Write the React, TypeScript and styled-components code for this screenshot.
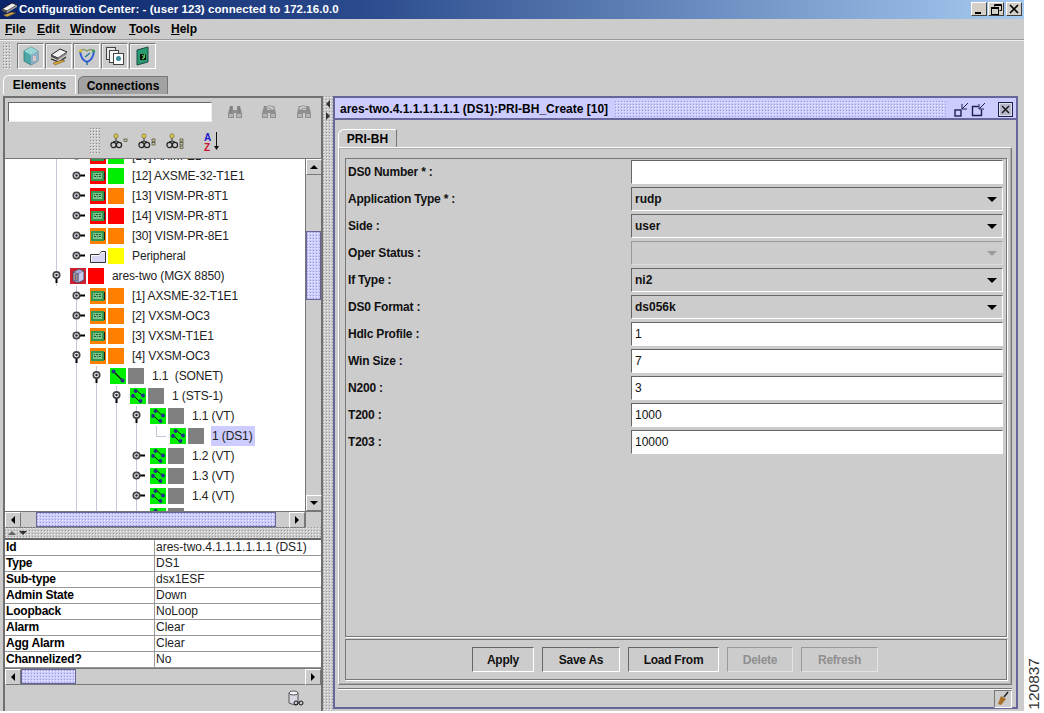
import React from 'react';
import styled, {createGlobalStyle, css} from 'styled-components';

const GlobalStyle = createGlobalStyle`
  html, body {
    margin: 0;
    padding: 0;
    background: #fff;
  }
  body {
    font-family: "Liberation Sans", Arial, sans-serif;
    font-size: 12px;
    color: #000;
    overflow: hidden;
  }
  * {
    box-sizing: border-box;
  }
`

const bumps = (dark: string, light: string) => css`
  background-image: radial-gradient(circle at 0.5px 0.5px, ${dark} 0.7px, transparent 0.8px),
    radial-gradient(circle at 1.5px 1.5px, ${light} 0.7px, transparent 0.8px);
  background-size: 3px 3px;
`

const Page = styled.div`
  display: flex;
  width: 1044px;
  height: 713px;
`

const Frame = styled.div`
  width: 1024px;
  height: 711px;
  background: #cccccc;
  display: flex;
  flex-direction: column;
`

const Strip = styled.div`
  flex: 1;
  display: flex;
  justify-content: center;
  align-items: flex-end;
  padding-bottom: 3px;
`

const FigureNumber = styled.span`
  writing-mode: vertical-rl;
  transform: rotate(180deg);
  font-size: 15.5px;
  line-height: 16px;
  color: #333;
`

const TitleBar = styled.div`
  height: 19px;
  flex: none;
  display: flex;
  align-items: center;
  padding: 0 2px 1px 1px;
  background: linear-gradient(90deg, #0a246a 0%, #2a4a8c 35%, #a6caf0 100%);
`

const TitleText = styled.span`
  margin-left: 1px;
  color: #fff;
  font-weight: bold;
  font-size: 11.5px;
  letter-spacing: 0.07px;
  flex: 1;
`

const WinButton = styled.button<{$gap?: number}>`
  width: 16px;
  height: 14px;
  padding: 0;
  margin-left: ${p => p.$gap ?? 1}px;
  background: #d4d0c8;
  border: 1px solid;
  border-color: #fff #404040 #404040 #fff;
  display: flex;
  align-items: center;
  justify-content: center;
`

const MenuBar = styled.div`
  height: 21px;
  flex: none;
  display: flex;
  align-items: center;
  padding-left: 5px;
  border-bottom: 1px solid #999;
  box-shadow: 0 1px 0 #eee;
`

const MenuItem = styled.span<{$width: number}>`
  width: ${p => p.$width}px;
  font-weight: bold;
  font-size: 12px;
  u {
    text-decoration: underline;
  }
`

const ToolBar = styled.div`
  height: 34px;
  flex: none;
  display: flex;
  gap: 1px;
  padding: 3px 0 0 3px;
`

const Grip = styled.div<{$width: number; $height: number}>`
  width: ${p => p.$width}px;
  height: ${p => p.$height}px;
  flex: none;
  ${bumps('#8a8a8a', '#f4f4f4')}
`

const ToolButton = styled.button<{$first?: boolean}>`
  width: 27px;
  height: 26px;
  margin-left: ${p => (p.$first ? 4 : 0)}px;
  padding: 0;
  background: #cccccc;
  border: 1px solid;
  border-color: #777 #fff #fff #777;
  box-shadow: inset 1px 1px 0 #eee;
  display: flex;
  align-items: center;
  justify-content: center;
`

const TabRow = styled.div`
  height: 20px;
  flex: none;
  display: flex;
  align-items: flex-end;
  gap: 2px;
  padding-left: 3px;
`

const MainTab = styled.div<{$active?: boolean}>`
  height: ${p => (p.$active ? 19 : 18)}px;
  width: ${p => (p.$active ? 73 : 90)}px;
  font-weight: bold;
  font-size: 12px;
  line-height: 18px;
  text-align: center;
  background: ${p => (p.$active ? '#cccccc' : '#a2a2a2')};
  border: 1px solid ${p => (p.$active ? '#fff' : '#777')};
  border-bottom: none;
  border-top-left-radius: 6px;
`

const Main = styled.div`
  flex: 1;
  min-height: 0;
  display: flex;
  padding: 2px 6px 0 3px;
`

const LeftPane = styled.div`
  width: 320px;
  flex: none;
  display: flex;
  flex-direction: column;
  border: 2px solid #707070;
  border-bottom: none;
`

const SearchBlock = styled.div`
  height: 60px;
  flex: none;
  display: flex;
  flex-direction: column;
`

const SearchRow = styled.div`
  height: 24px;
  display: flex;
  align-items: center;
  padding: 4px 0 0 3px;
`

const SearchInput = styled.div`
  width: 204px;
  height: 20px;
  background: #fff;
  border: 1px solid;
  border-color: #666 #eee #eee #666;
`

const FindButton = styled.span<{$gap: number}>`
  margin-left: ${p => p.$gap}px;
  display: flex;
`

const FilterRow = styled.div`
  flex: 1;
  display: flex;
  align-items: center;
  padding: 3px 0 0 85px;
`

const FilterIcon = styled.span<{$gap: number}>`
  margin-left: ${p => p.$gap}px;
  display: flex;
`

const TreeBlock = styled.div`
  height: 369px;
  flex: none;
  display: grid;
  grid-template-columns: 300px 16px;
  grid-template-rows: 352px 17px;
  border-top: 1px solid #777;
`

const TreeView = styled.div`
  background: #fff;
  overflow: hidden;
`

const TreeInner = styled.div`
  margin-top: -13px;
`

const Row = styled.div`
  height: 20px;
  display: flex;
  align-items: center;
  padding-left: 41px;
  white-space: nowrap;
`

const Cell = styled.div<{$line?: boolean}>`
  width: 20px;
  height: 20px;
  flex: none;
  ${p => p.$line && css`
    background: linear-gradient(#c6c6da, #c6c6da) 10px 0 / 1px 100% no-repeat;
  `}
  svg {
    display: block;
  }
`

const IconSlot = styled.div`
  width: 16px;
  height: 16px;
  flex: none;
  margin-left: 4px;
  svg {
    display: block;
  }
`

const StatusBox = styled.div<{$color: string}>`
  width: 16px;
  height: 16px;
  flex: none;
  margin-left: 2px;
  background: ${p => p.$color};
`

const TreeLabel = styled.span<{$selected?: boolean}>`
  margin-left: 7px;
  padding: 0 2px 0 1px;
  height: 20px;
  line-height: 20px;
  font-size: 12px;
  letter-spacing: -0.12px;
  white-space: pre;
  color: #222;
  background: ${p => (p.$selected ? '#ccccff' : 'transparent')};
`

const VScroll = styled.div`
  display: flex;
  flex-direction: column;
  background: #cccccc;
  border-left: 1px solid #777;
`

const HScroll = styled.div<{$height?: number}>`
  display: flex;
  height: ${p => p.$height ?? 17}px;
  background: #cccccc;
  border-top: 1px solid #777;
  border-bottom: 1px solid #777;
`

const ScrollButton = styled.div`
  width: 16px;
  height: 16px;
  flex: none;
  display: flex;
  align-items: center;
  justify-content: center;
  background: #cccccc;
  border: 1px solid;
  border-color: #fff #777 #777 #fff;
`

const Arrow = styled.span<{$dir: 'up' | 'down' | 'left' | 'right'; $size?: number; $color?: string}>`
  width: 0;
  height: 0;
  border-style: solid;
  ${p => {
    const s = p.$size ?? 4
    const c = p.$color ?? '#000'
    switch (p.$dir) {
      case 'up': return `border-width: 0 ${s}px ${s}px; border-color: transparent transparent ${c};`
      case 'down': return `border-width: ${s}px ${s}px 0; border-color: ${c} transparent transparent;`
      case 'left': return `border-width: ${s}px ${s}px ${s}px 0; border-color: transparent ${c} transparent transparent;`
      default: return `border-width: ${s}px 0 ${s}px ${s}px; border-color: transparent transparent transparent ${c};`
    }
  }}
`

const Space = styled.div<{$size: number}>`
  flex: ${p => p.$size} 0 0;
`

const Thumb = styled.div<{$size: number}>`
  flex: ${p => p.$size} 0 0;
  background-color: #ccccff;
  border: 1px solid #66669a;
  ${bumps('#9999cc', '#eeeeff')}
`

const Corner = styled.div`
  background: #cccccc;
  border-top: 1px solid #777;
  border-left: 1px solid #777;
`

const PaneDivider = styled.div`
  height: 11px;
  flex: none;
  display: flex;
  align-items: center;
  gap: 3px;
  padding-left: 3px;
  ${bumps('#9a9a9a', '#efefef')}
`

const PropsTable = styled.div`
  flex: none;
  display: grid;
  grid-template-columns: 150px 1fr;
  grid-auto-rows: 16px;
  background: #fff;
  border-top: 2px solid #666;
`

const PropName = styled.div`
  font-weight: bold;
  font-size: 12px;
  line-height: 15px;
  letter-spacing: -0.2px;
  padding-left: 1px;
  border-bottom: 1px solid #999;
  border-right: 1px solid #999;
  white-space: nowrap;
`

const PropValue = styled.div`
  font-size: 12px;
  line-height: 15px;
  padding-left: 1px;
  color: #222;
  border-bottom: 1px solid #999;
  white-space: nowrap;
`

const PaneFooter = styled.div`
  flex: 1;
  display: flex;
  justify-content: flex-end;
  align-items: center;
  padding-right: 16px;
`

const Splitter = styled.div`
  width: 10px;
  flex: none;
  display: flex;
  flex-direction: column;
  align-items: center;
  gap: 4px;
  padding: 4px 2px 0 1px;
  ${bumps('#9a9a9a', '#efefef')}
`

const RightPane = styled.div`
  flex: 1;
  min-width: 0;
  display: flex;
  flex-direction: column;
  margin-bottom: 2px;
  border: 2px solid #66669a;
`

const FrameHeader = styled.div`
  height: 22px;
  flex: none;
  display: flex;
  align-items: center;
  padding: 2px 3px 0 5px;
  background: #ccccff;
  border-bottom: 2px solid #66669a;
`

const FrameTitle = styled.span`
  font-weight: bold;
  font-size: 12px;
  white-space: nowrap;
`

const FrameGrip = styled.div`
  flex: 1;
  height: 16px;
  margin: 0 8px 0 7px;
  ${bumps('#9999cc', '#eeeeff')}
`

const FrameIcon = styled.span<{$gap: number}>`
  margin-left: ${p => p.$gap}px;
  display: flex;
`

const FrameBody = styled.div`
  flex: 1;
  min-height: 0;
  display: flex;
  flex-direction: column;
  padding: 0 4px 0 3px;
`

const SubTabRow = styled.div`
  height: 27px;
  flex: none;
  display: flex;
  align-items: flex-end;
`

const SubTab = styled.div`
  width: 59px;
  height: 18px;
  font-weight: bold;
  font-size: 12px;
  line-height: 18px;
  text-align: center;
  border: 1px solid #fff;
  border-right-color: #777;
  border-bottom: none;
  border-top-left-radius: 6px;
`

const TabPane = styled.div`
  height: 538px;
  flex: none;
  display: flex;
  flex-direction: column;
  gap: 2px;
  padding: 10px 4px 4px 6px;
  border: 1px solid;
  border-color: #fff #777 #777 #fff;
  outline: 1px solid #aaa;
  outline-offset: -2px;
`

const FormPanel = styled.div`
  flex: 1;
  display: grid;
  grid-template-columns: 1fr 372px;
  grid-auto-rows: 24px;
  row-gap: 3px;
  padding: 1px 3px 0 2px;
  border: 1px solid #777;
  box-shadow: 1px 1px 0 #fff;
`

const FormLabel = styled.label`
  font-weight: bold;
  font-size: 12px;
  line-height: 24px;
  letter-spacing: -0.2px;
  color: #111;
`

const Field = styled.div<{$bold?: boolean; $white?: boolean; $disabled?: boolean}>`
  display: flex;
  align-items: center;
  justify-content: space-between;
  padding: 0 5px 0 3px;
  font-size: 12px;
  font-weight: ${p => (p.$bold ? 'bold' : 'normal')};
  background: ${p => (p.$white ? '#fff' : '#cccccc')};
  border: 1px solid;
  border-color: ${p => (p.$disabled ? '#999 #ddd #ddd #999' : '#666 #fff #fff #666')};
  color: #111;
`

const ButtonPanel = styled.div`
  height: 41px;
  flex: none;
  display: flex;
  align-items: center;
  padding: 0 0 0 126px;
  gap: 8px;
  border: 1px solid #777;
  box-shadow: 1px 1px 0 #fff;
`

const ActionButton = styled.button<{$width: number}>`
  width: ${p => p.$width}px;
  height: 25px;
  padding: 0;
  font-family: inherit;
  font-weight: bold;
  font-size: 12px;
  letter-spacing: -0.25px;
  color: #111;
  background: #cccccc;
  border: 1px solid;
  border-color: #666 #fff #fff #666;
  &:disabled {
    color: #8f8f8f;
    border-color: #999 #e4e4e4 #e4e4e4 #999;
  }
`

const StatusBar = styled.div`
  flex: 1;
  display: flex;
  justify-content: flex-end;
  align-items: stretch;
  margin-top: 3px;
  border-top: 1px solid #777;
  box-shadow: inset 0 1px 0 #fff;
  padding-top: 1px;
`

const PinCell = styled.div`
  width: 18px;
  display: flex;
  align-items: center;
  justify-content: center;
  border: 1px solid;
  border-color: #777 #fff #fff #777;
`

const green = '#00ee00'
const orange = '#ff8000'
const red = '#ff0000'
const yellow = '#ffff00'
const gray = '#808080'

const Card = ({bg}: {bg: string}) => (
  <svg width="16" height="16" viewBox="0 0 16 16">
    <rect width="16" height="16" fill={bg}/>
    <rect x="1" y="3" width="13" height="10" fill="#2f9a4f"/>
    <rect x="3" y="5" width="9" height="6" fill="#7cc48c"/>
    <path d="M4 6.5h1M6 6.5h2M9 6.5h2M4 8.5h2M7 8.5h1M9 8.5h2" stroke="#1d5a38" strokeWidth="1"/>
    <rect x="14" y="4" width="1" height="8" fill="#222"/>
  </svg>
)

const Folder = () => (
  <svg width="16" height="16" viewBox="0 0 16 16">
    <path d="M0.5 6.5h9l2-3h4v11h-15z" fill="#d8d8f4" stroke="#333"/>
    <path d="M1.5 13.5v-6h8l2-3h3" fill="none" stroke="#fff"/>
  </svg>
)

const Chassis = () => (
  <svg width="16" height="16" viewBox="0 0 16 16">
    <rect width="16" height="16" fill="#d02030"/>
    <path d="M3 4l6-3 5 2v9l-6 3-5-2z" fill="#a8a8d8" stroke="#333" strokeWidth="0.6"/>
    <path d="M3 4l5 2 6-3M8 6v9" fill="none" stroke="#333" strokeWidth="0.6"/>
    <path d="M3.5 6h4v7h-4z" fill="#6a6a9a"/>
    <path d="M4 7h1M6 7h1M4 9h1M6 9h1M4 11h1M6 11h1" stroke="#e6c050"/>
    <path d="M9 5.5l4-2v8l-4 2z" fill="#c8c8ea"/>
  </svg>
)

const SingleLink = () => (
  <svg width="16" height="16" viewBox="0 0 16 16">
    <rect width="16" height="16" fill={green}/>
    <path d="M3 3l10 10" stroke="#111" strokeWidth="1.2"/>
    <circle cx="3.5" cy="3.5" r="2" fill="#23308a"/>
    <circle cx="12.5" cy="12.5" r="2" fill="#23308a"/>
  </svg>
)

const MultiLink = () => (
  <svg width="16" height="16" viewBox="0 0 16 16">
    <rect width="16" height="16" fill={green}/>
    <path d="M5 1l9 8M2 6l9 9" stroke="#111" strokeWidth="1"/>
    <circle cx="5.5" cy="3" r="1.9" fill="#23308a"/>
    <circle cx="13" cy="7.5" r="1.9" fill="#23308a"/>
    <circle cx="3" cy="8" r="1.9" fill="#23308a"/>
    <circle cx="10.5" cy="13" r="1.9" fill="#23308a"/>
  </svg>
)

const OpenHandle = () => (
  <svg width="20" height="20" viewBox="0 0 20 20">
    <path d="M10.5 11v6" stroke="#000" strokeWidth="2"/>
    <circle cx="10.5" cy="9" r="3.2" fill="#f4f4fa" stroke="#444" strokeWidth="1.7"/>
    <circle cx="10.5" cy="9" r="1.2" fill="#223"/>
  </svg>
)

const ClosedHandle = () => (
  <svg width="20" height="20" viewBox="0 0 20 20">
    <path d="M13 9.5h6" stroke="#000" strokeWidth="2"/>
    <circle cx="10.5" cy="9.5" r="3.2" fill="#f4f4fa" stroke="#444" strokeWidth="1.7"/>
    <circle cx="10.5" cy="9.5" r="1.2" fill="#223"/>
  </svg>
)

const Elbow = () => (
  <svg width="20" height="20" viewBox="0 0 20 20">
    <path d="M10.5 0v10.5h9.5" fill="none" stroke="#c6c6da"/>
  </svg>
)

const Binoculars = ({variant}: {variant: 'plain' | 'next' | 'prev'}) => (
  <svg width="18" height="16" viewBox="0 0 18 16">
    <path d="M4 2h3v4h4V2h3l2 7v5h-6V9H8v5H2V9z" fill="#8f8f8f"/>
    <path d="M3 10h4v3H3zM11 10h4v3h-4z" fill="#b4b4b4"/>
    {variant === 'plain' && <path d="M5 2v7M13 2v7" stroke="#777"/>}
    {variant === 'next' && <path d="M6 3q4-3 7 0l1-1v4h-4l1-1q-2-2-4 0z" fill="#cccccc" stroke="#888" strokeWidth="0.7"/>}
    {variant === 'prev' && <path d="M12 3q-4-3-7 0l-1-1v4h4l-1-1q2-2 4 0z" fill="#cccccc" stroke="#888" strokeWidth="0.7"/>}
  </svg>
)

const Glasses = ({count}: {count: number}) => (
  <svg width="19" height="17" viewBox="0 0 19 17">
    <circle cx="6" cy="3" r="2.2" fill="#d8c838" stroke="#555" strokeWidth="0.5"/>
    <path d="M6 5v3" stroke="#444"/>
    <circle cx="3.5" cy="12" r="2.6" fill="none" stroke="#222" strokeWidth="1.2"/>
    <circle cx="9" cy="12" r="2.6" fill="none" stroke="#222" strokeWidth="1.2"/>
    <path d="M3 9l3-1 3 1" fill="none" stroke="#222"/>
    {Array.from({length: count}).map((_, i) => (
      <rect key={i} x="14" y={6 + i * 3.5} width="3" height="2.5" fill="#cfc890" stroke="#333" strokeWidth="0.6"/>
    ))}
  </svg>
)

const SortIcon = () => (
  <svg width="18" height="22" viewBox="0 0 18 22">
    <text x="0" y="10" fontFamily="Liberation Sans" fontWeight="bold" fontSize="10" fill="#1a1ac8">A</text>
    <text x="0" y="20" fontFamily="Liberation Sans" fontWeight="bold" fontSize="10" fill="#d01030">Z</text>
    <path d="M12.5 1v15" stroke="#111" strokeWidth="1"/>
    <path d="M10 15h5l-2.5 4z" fill="#111"/>
  </svg>
)

const CubeTool = () => (
  <svg width="18" height="20" viewBox="0 0 18 20">
    <path d="M2 5l7-4 7 4v10l-7 4-7-4z" fill="#4fa8a8" stroke="#2a6a6a" strokeWidth="0.7"/>
    <path d="M2 5l7 4 7-4-7-4z" fill="#9ad8d8"/>
    <path d="M9 9l7-4v10l-7 4z" fill="#8fb0c8"/>
    <path d="M11 10h3v5h-3z" fill="#d8c8c8"/>
  </svg>
)

const DiskTool = () => (
  <svg width="20" height="20" viewBox="0 0 20 20">
    <path d="M2 9l9-6 7 3-9 6z" fill="#f2f2f2" stroke="#222"/>
    <path d="M2 9l7 3v2l-7-3z" fill="#555"/>
    <path d="M9 12l9-6v2l-9 6z" fill="#888"/>
    <path d="M2 13l8 3 7-5" fill="none" stroke="#222" strokeWidth="1.2"/>
    <path d="M4 17l9-3 3 1-10 4z" fill="#d8a838" stroke="#6a4a18" strokeWidth="0.5"/>
  </svg>
)

const ScopeTool = () => (
  <svg width="20" height="20" viewBox="0 0 20 20">
    <path d="M3 5q1 9 7 11q6-2 7-11" fill="none" stroke="#2a5ad8" strokeWidth="2"/>
    <path d="M3 5q3-3 7 0q4-3 7 0" fill="none" stroke="#8a9a6a" strokeWidth="1.5"/>
    <circle cx="3.5" cy="5" r="1.6" fill="#d8c030"/>
    <circle cx="16.5" cy="5" r="1.6" fill="#30a060"/>
    <path d="M10 16v3M8 11l5-4" stroke="#2a7a9a" strokeWidth="1.5"/>
  </svg>
)

const PagesTool = () => (
  <svg width="20" height="20" viewBox="0 0 20 20">
    <rect x="1.5" y="1.5" width="9" height="12" fill="#e8e8e8" stroke="#444"/>
    <rect x="4.5" y="4.5" width="9" height="12" fill="#f4f4f4" stroke="#444"/>
    <rect x="8.5" y="7.5" width="10" height="11" fill="#fff" stroke="#444"/>
    <circle cx="13.5" cy="12.5" r="2.5" fill="#3a8a9a"/>
  </svg>
)

const ExitTool = () => (
  <svg width="16" height="20" viewBox="0 0 16 20">
    <path d="M2 4l11-3v15l-11 3z" fill="#2a9a70" stroke="#1a4a4a"/>
    <path d="M5 8h6v6H5z" fill="#111"/>
    <path d="M7 9l3 2-3 2M10 8l-2 5" fill="none" stroke="#5ae05a"/>
  </svg>
)

const AppIcon = () => (
  <svg width="17" height="17" viewBox="0 0 17 17">
    <path d="M1 8l10-6 5 2-10 6z" fill="#eee" stroke="#111" strokeWidth="0.8"/>
    <path d="M1 8l5 2v2l-5-2z" fill="#555"/>
    <path d="M6 10l10-6v2L6 12z" fill="#999"/>
    <path d="M2 14l9-3 4 1-9 4z" fill="#caa040" stroke="#333" strokeWidth="0.5"/>
  </svg>
)

const MinGlyph = () => (
  <svg width="10" height="10" viewBox="0 0 10 10"><path d="M1 8h6v2H1z" fill="#000"/></svg>
)

const RestoreGlyph = () => (
  <svg width="11" height="11" viewBox="0 0 11 11">
    <path d="M3.5 2.5v-2h7v6h-2M3 1.5h7" fill="none" stroke="#000"/>
    <rect x="0.5" y="3.5" width="7" height="7" fill="none" stroke="#000"/>
    <path d="M0 4.5h8" stroke="#000"/>
  </svg>
)

const CloseGlyph = () => (
  <svg width="10" height="10" viewBox="0 0 10 10">
    <path d="M1 1l8 8M9 1l-8 8" stroke="#000" strokeWidth="1.6"/>
  </svg>
)

const DockIcon = ({big}: {big?: boolean}) => (
  <svg width="16" height="16" viewBox="0 0 16 16">
    {big
      ? <path d="M7.5 5.5h-6v9h9v-6" fill="none" stroke="#202050" strokeWidth="1.4"/>
      : <rect x="1" y="9" width="6" height="6" fill="none" stroke="#202050" strokeWidth="1.4"/>}
    <path d="M14 2L8 8M8 3v5h5" fill="none" stroke="#202050" strokeWidth="1"/>
  </svg>
)

const FrameClose = () => (
  <svg width="15" height="15" viewBox="0 0 15 15">
    <rect x="0.5" y="0.5" width="14" height="14" fill="#b8b8cc" stroke="#202050"/>
    <rect x="1.5" y="1.5" width="12" height="12" fill="none" stroke="#fff" strokeWidth="0.5"/>
    <path d="M4 4l7 7M11 4l-7 7" stroke="#111" strokeWidth="1.4"/>
  </svg>
)

const DbIcon = () => (
  <svg width="18" height="17" viewBox="0 0 18 17">
    <path d="M2 3v10q5 3 9 1V3z" fill="#d8d8e4" stroke="#555"/>
    <ellipse cx="6.5" cy="3" rx="4.5" ry="2" fill="#f4f4f8" stroke="#555"/>
    <circle cx="9" cy="13" r="2" fill="none" stroke="#111"/>
    <circle cx="14" cy="13" r="2" fill="none" stroke="#111"/>
  </svg>
)

const PinIcon = () => (
  <svg width="14" height="16" viewBox="0 0 14 16">
    <path d="M12 1L8 6" stroke="#222" strokeWidth="1.5"/>
    <path d="M5 5l5 3-5 6-3-1z" fill="#a87028"/>
  </svg>
)

type TreeRow = {
  cells: string
  icon: React.ReactNode
  status: string
  label: string
  selected?: boolean
}

// cells: one char for each indent step. | line, o open, c closed, C closed on a line, L elbow, _ empty
const treeRows: TreeRow[] = [
  {cells: '|c', icon: <Card bg={red}/>, status: green, label: '[10] AXIM-E1'},
  {cells: '|c', icon: <Card bg={red}/>, status: green, label: '[12] AXSME-32-T1E1'},
  {cells: '|c', icon: <Card bg={red}/>, status: orange, label: '[13] VISM-PR-8T1'},
  {cells: '|c', icon: <Card bg={red}/>, status: red, label: '[14] VISM-PR-8T1'},
  {cells: '|c', icon: <Card bg={orange}/>, status: orange, label: '[30] VISM-PR-8E1'},
  {cells: '|c', icon: <Folder/>, status: yellow, label: 'Peripheral'},
  {cells: 'o', icon: <Chassis/>, status: red, label: 'ares-two (MGX 8850)'},
  {cells: '_C', icon: <Card bg={orange}/>, status: orange, label: '[1] AXSME-32-T1E1'},
  {cells: '_C', icon: <Card bg={orange}/>, status: orange, label: '[2] VXSM-OC3'},
  {cells: '_C', icon: <Card bg={orange}/>, status: orange, label: '[3] VXSM-T1E1'},
  {cells: '_o', icon: <Card bg={orange}/>, status: orange, label: '[4] VXSM-OC3'},
  {cells: '_|o', icon: <SingleLink/>, status: gray, label: '1.1  (SONET)'},
  {cells: '_||o', icon: <MultiLink/>, status: gray, label: '1 (STS-1)'},
  {cells: '_|||o', icon: <MultiLink/>, status: gray, label: '1.1 (VT)'},
  {cells: '_||||L', icon: <MultiLink/>, status: gray, label: '1 (DS1)', selected: true},
  {cells: '_|||C', icon: <MultiLink/>, status: gray, label: '1.2 (VT)'},
  {cells: '_|||C', icon: <MultiLink/>, status: gray, label: '1.3 (VT)'},
  {cells: '_|||C', icon: <MultiLink/>, status: gray, label: '1.4 (VT)'},
  {cells: '_|||C', icon: <MultiLink/>, status: gray, label: '1.5 (VT)'},
]

const renderCell = (kind: string, i: number) => {
  const line = kind === '|' || kind === 'C' || kind === 'o'
  return (
    <Cell key={i} $line={line}>
      {(kind === 'c' || kind === 'C') && <ClosedHandle/>}
      {kind === 'o' && <OpenHandle/>}
      {kind === 'L' && <Elbow/>}
    </Cell>
  )
}

const properties = [
  ['Id', 'ares-two.4.1.1.1.1.1.1 (DS1)'],
  ['Type', 'DS1'],
  ['Sub-type', 'dsx1ESF'],
  ['Admin State', 'Down'],
  ['Loopback', 'NoLoop'],
  ['Alarm', 'Clear'],
  ['Agg Alarm', 'Clear'],
  ['Channelized?', 'No'],
]

const formFields = [
  {label: 'DS0 Number * :', value: '', kind: 'text'},
  {label: 'Application Type * :', value: 'rudp', kind: 'combo'},
  {label: 'Side :', value: 'user', kind: 'combo'},
  {label: 'Oper Status :', value: '', kind: 'disabled'},
  {label: 'If Type :', value: 'ni2', kind: 'combo'},
  {label: 'DS0 Format :', value: 'ds056k', kind: 'combo'},
  {label: 'Hdlc Profile :', value: '1', kind: 'text'},
  {label: 'Win Size :', value: '7', kind: 'text'},
  {label: 'N200 :', value: '3', kind: 'text'},
  {label: 'T200 :', value: '1000', kind: 'text'},
  {label: 'T203 :', value: '10000', kind: 'text'},
]

const App = () => {
  return (
    <Page>
      <GlobalStyle/>
      <Frame>
        <TitleBar>
          <AppIcon/>
          <TitleText>Configuration Center: - (user 123) connected to 172.16.0.0</TitleText>
          <WinButton><MinGlyph/></WinButton>
          <WinButton><RestoreGlyph/></WinButton>
          <WinButton $gap={2}><CloseGlyph/></WinButton>
        </TitleBar>

        <MenuBar>
          <MenuItem $width={32}><u>F</u>ile</MenuItem>
          <MenuItem $width={33}><u>E</u>dit</MenuItem>
          <MenuItem $width={59}><u>W</u>indow</MenuItem>
          <MenuItem $width={42}><u>T</u>ools</MenuItem>
          <MenuItem $width={40}><u>H</u>elp</MenuItem>
        </MenuBar>

        <ToolBar>
          <Grip $width={9} $height={27}/>
          <ToolButton $first><CubeTool/></ToolButton>
          <ToolButton><DiskTool/></ToolButton>
          <ToolButton><ScopeTool/></ToolButton>
          <ToolButton><PagesTool/></ToolButton>
          <ToolButton><ExitTool/></ToolButton>
        </ToolBar>

        <TabRow>
          <MainTab $active>Elements</MainTab>
          <MainTab>Connections</MainTab>
        </TabRow>

        <Main>
          <LeftPane>
            <SearchBlock>
              <SearchRow>
                <SearchInput/>
                <FindButton $gap={14}><Binoculars variant="plain"/></FindButton>
                <FindButton $gap={16}><Binoculars variant="next"/></FindButton>
                <FindButton $gap={17}><Binoculars variant="prev"/></FindButton>
              </SearchRow>
              <FilterRow>
                <Grip $width={10} $height={27}/>
                <FilterIcon $gap={10}><Glasses count={1}/></FilterIcon>
                <FilterIcon $gap={9}><Glasses count={2}/></FilterIcon>
                <FilterIcon $gap={9}><Glasses count={3}/></FilterIcon>
                <FilterIcon $gap={19}><SortIcon/></FilterIcon>
              </FilterRow>
            </SearchBlock>

            <TreeBlock>
              <TreeView>
                <TreeInner>
                  {treeRows.map(row => (
                    <Row key={row.label}>
                      {row.cells.split('').map(renderCell)}
                      <IconSlot>{row.icon}</IconSlot>
                      <StatusBox $color={row.status}/>
                      <TreeLabel $selected={row.selected}>{row.label}</TreeLabel>
                    </Row>
                  ))}
                </TreeInner>
              </TreeView>
              <VScroll>
                <ScrollButton><Arrow $dir="up"/></ScrollButton>
                <Space $size={56}/>
                <Thumb $size={68}/>
                <Space $size={196}/>
                <ScrollButton><Arrow $dir="down"/></ScrollButton>
              </VScroll>
              <HScroll>
                <ScrollButton><Arrow $dir="left"/></ScrollButton>
                <Space $size={15}/>
                <Thumb $size={240}/>
                <Space $size={13}/>
                <ScrollButton><Arrow $dir="right"/></ScrollButton>
              </HScroll>
              <Corner/>
            </TreeBlock>

            <PaneDivider>
              <Arrow $dir="up" $size={4} $color="#666"/>
              <Arrow $dir="down" $size={4} $color="#333"/>
            </PaneDivider>

            <PropsTable>
              {properties.map(([name, value]) => (
                <React.Fragment key={name}>
                  <PropName>{name}</PropName>
                  <PropValue>{value}</PropValue>
                </React.Fragment>
              ))}
            </PropsTable>

            <HScroll>
              <ScrollButton><Arrow $dir="left"/></ScrollButton>
              <Thumb $size={53}/>
              <Space $size={231}/>
              <ScrollButton><Arrow $dir="right"/></ScrollButton>
            </HScroll>

            <PaneFooter><DbIcon/></PaneFooter>
          </LeftPane>

          <Splitter>
            <Arrow $dir="left" $size={4} $color="#333"/>
            <Arrow $dir="right" $size={4} $color="#333"/>
          </Splitter>

          <RightPane>
            <FrameHeader>
              <FrameTitle>ares-two.4.1.1.1.1.1.1 (DS1):PRI-BH_Create [10]</FrameTitle>
              <FrameGrip/>
              <FrameIcon $gap={0}><DockIcon/></FrameIcon>
              <FrameIcon $gap={1}><DockIcon big/></FrameIcon>
              <FrameIcon $gap={11}><FrameClose/></FrameIcon>
            </FrameHeader>

            <FrameBody>
              <SubTabRow><SubTab>PRI-BH</SubTab></SubTabRow>
              <TabPane>
                <FormPanel>
                  {formFields.map(field => (
                    <React.Fragment key={field.label}>
                      <FormLabel>{field.label}</FormLabel>
                      <Field
                        $bold={field.kind === 'combo'}
                        $white={field.kind === 'text'}
                        $disabled={field.kind === 'disabled'}
                      >
                        <span>{field.value}</span>
                        {field.kind === 'combo' && <Arrow $dir="down" $size={5}/>}
                        {field.kind === 'disabled' && <Arrow $dir="down" $size={5} $color="#999"/>}
                      </Field>
                    </React.Fragment>
                  ))}
                </FormPanel>
                <ButtonPanel>
                  <ActionButton $width={62}>Apply</ActionButton>
                  <ActionButton $width={78}>Save As</ActionButton>
                  <ActionButton $width={91}>Load From</ActionButton>
                  <ActionButton $width={66} disabled>Delete</ActionButton>
                  <ActionButton $width={77} disabled>Refresh</ActionButton>
                </ButtonPanel>
              </TabPane>
              <StatusBar>
                <PinCell><PinIcon/></PinCell>
              </StatusBar>
            </FrameBody>
          </RightPane>
        </Main>
      </Frame>
      <Strip><FigureNumber>120837</FigureNumber></Strip>
    </Page>
  );
}

export default App;
